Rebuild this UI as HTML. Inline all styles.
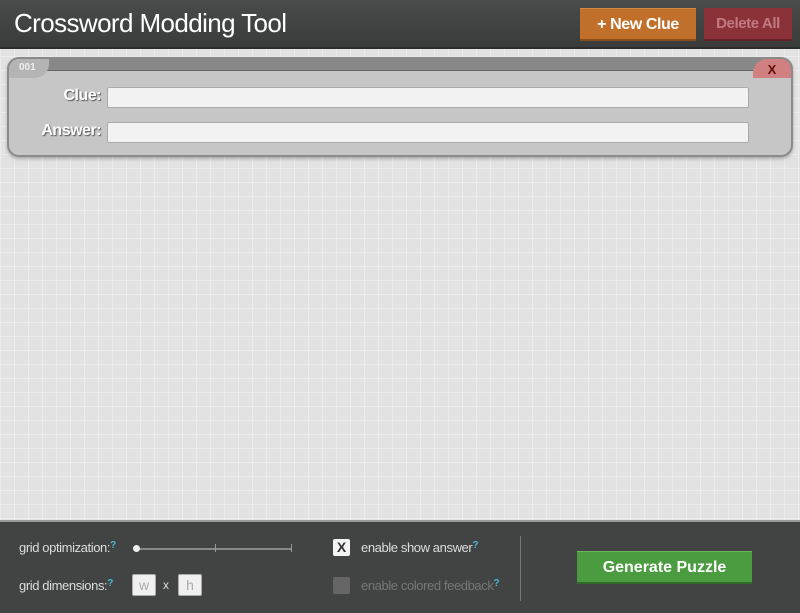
<!DOCTYPE html>
<html><head><meta charset="utf-8"><style>
*{margin:0;padding:0;box-sizing:border-box}
body{width:800px;height:613px;overflow:hidden;position:relative;font-family:"Liberation Sans",sans-serif;
background-color:#e2e2e2;
background-image:linear-gradient(#ececec 1px,transparent 1px),linear-gradient(90deg,#ececec 1px,transparent 1px);
background-size:14px 14px}
.hdr{position:absolute;left:0;top:0;width:800px;height:49px;background:linear-gradient(#4a4b4b,#3a3b3b);border-bottom:2px solid #2c2c2c}
.title{position:absolute;left:14px;top:8px;color:#fff;font-size:26px;letter-spacing:-0.6px}
.btn{position:absolute;top:8px;height:33px;color:#fff;font-size:16px;font-weight:bold;text-align:center;line-height:32px;letter-spacing:-0.4px}
.nc{left:580px;width:116px;background:#c0702a;border-bottom:2px solid #8a4e1c;border-top:1px solid #d58a44}
.da{left:704px;width:88px;background:#8a3238;color:#c27a80;border-bottom:2px solid #5e2226;font-size:15px}
.card{position:absolute;left:7px;top:57px;width:786px;height:100px;background:#c6c6c6;border:2px solid #8a8a8a;border-radius:12px;box-shadow:0 2px 3px rgba(0,0,0,.25);overflow:hidden}
.bar{position:absolute;left:0;top:0;width:100%;height:12px;background:#888;border-bottom:1px solid #666}
.num{position:absolute;left:0;top:0;width:40px;height:19px;background:#b4b4b4;border-radius:0 0 14px 0;color:#eee;font-size:10px;font-weight:bold;padding:3px 0 0 10px}
.x{position:absolute;right:0;top:0;width:38px;height:19px;background:#d08080;border-radius:14px 0 0 0;color:#6a0a0a;font-size:13px;font-weight:bold;text-align:center;line-height:22px}
.lbl{position:absolute;color:#fff;font-size:16px;font-weight:bold;text-shadow:1px 1px 1px #555;text-align:right;width:92px;left:0;letter-spacing:-0.5px}
.inp{position:absolute;left:98px;width:642px;height:21px;background:#f2f2f2;border:1px solid #aaa;border-radius:2px}
.ftr{position:absolute;left:0;top:520px;width:800px;height:93px;background:#424343;border-top:2px solid #9a9a9a}
.ft{position:absolute;color:#ddd;font-size:13px;letter-spacing:-0.4px}
.q{color:#4ab8d8;font-size:10px;vertical-align:top;font-weight:bold}
.box{position:absolute;width:24px;height:22px;background:#f0f0f0;border:1px solid #aaa;border-radius:2px;color:#aaa;font-size:14px;text-align:center;line-height:20px}
.gen{position:absolute;left:577px;top:551px;width:175px;height:33px;background:#4b9b41;border-bottom:2px solid #2f6a2a;border-top:1px solid #6cb85e;color:#fff;font-size:16px;font-weight:bold;text-align:center;line-height:31px}
</style></head><body>
<div class="hdr"><div class="title">Crossword Modding Tool</div>
<div class="btn nc">+ New Clue</div><div class="btn da">Delete All</div></div>
<div class="card"><div class="bar"></div><div class="num">001</div><div class="x">X</div>
<div class="lbl" style="top:28px">Clue:</div><div class="inp" style="top:28px"></div>
<div class="lbl" style="top:63px">Answer:</div><div class="inp" style="top:63px"></div></div>
<div class="ftr"></div>
<div class="ft" style="left:19px;top:540px">grid optimization:<span class="q">?</span></div>
<div style="position:absolute;left:137px;top:548px;width:155px;height:2px;background:#888"></div>
<div style="position:absolute;left:133px;top:545px;width:7px;height:7px;border-radius:50%;background:#eee"></div>
<div style="position:absolute;left:215px;top:544px;width:1px;height:8px;background:#999"></div>
<div style="position:absolute;left:291px;top:544px;width:1px;height:8px;background:#999"></div>
<div class="ft" style="left:19px;top:578px">grid dimensions:<span class="q">?</span></div>
<div class="box" style="left:132px;top:574px">w</div>
<div class="ft" style="left:163px;top:578px;font-size:12px">x</div>
<div class="box" style="left:178px;top:574px">h</div>
<div style="position:absolute;left:333px;top:539px;width:17px;height:17px;background:#f4f4f4;border-radius:2px;color:#333;font-weight:bold;font-size:14px;text-align:center;line-height:17px">X</div>
<div class="ft" style="left:361px;top:540px">enable show answer<span class="q">?</span></div>
<div style="position:absolute;left:333px;top:577px;width:17px;height:17px;background:#666;border-radius:2px"></div>
<div class="ft" style="left:361px;top:578px;color:#777">enable colored feedback<span class="q">?</span></div>
<div style="position:absolute;left:520px;top:536px;width:1px;height:65px;background:#777"></div>
<div class="gen">Generate Puzzle</div>
</body></html>
